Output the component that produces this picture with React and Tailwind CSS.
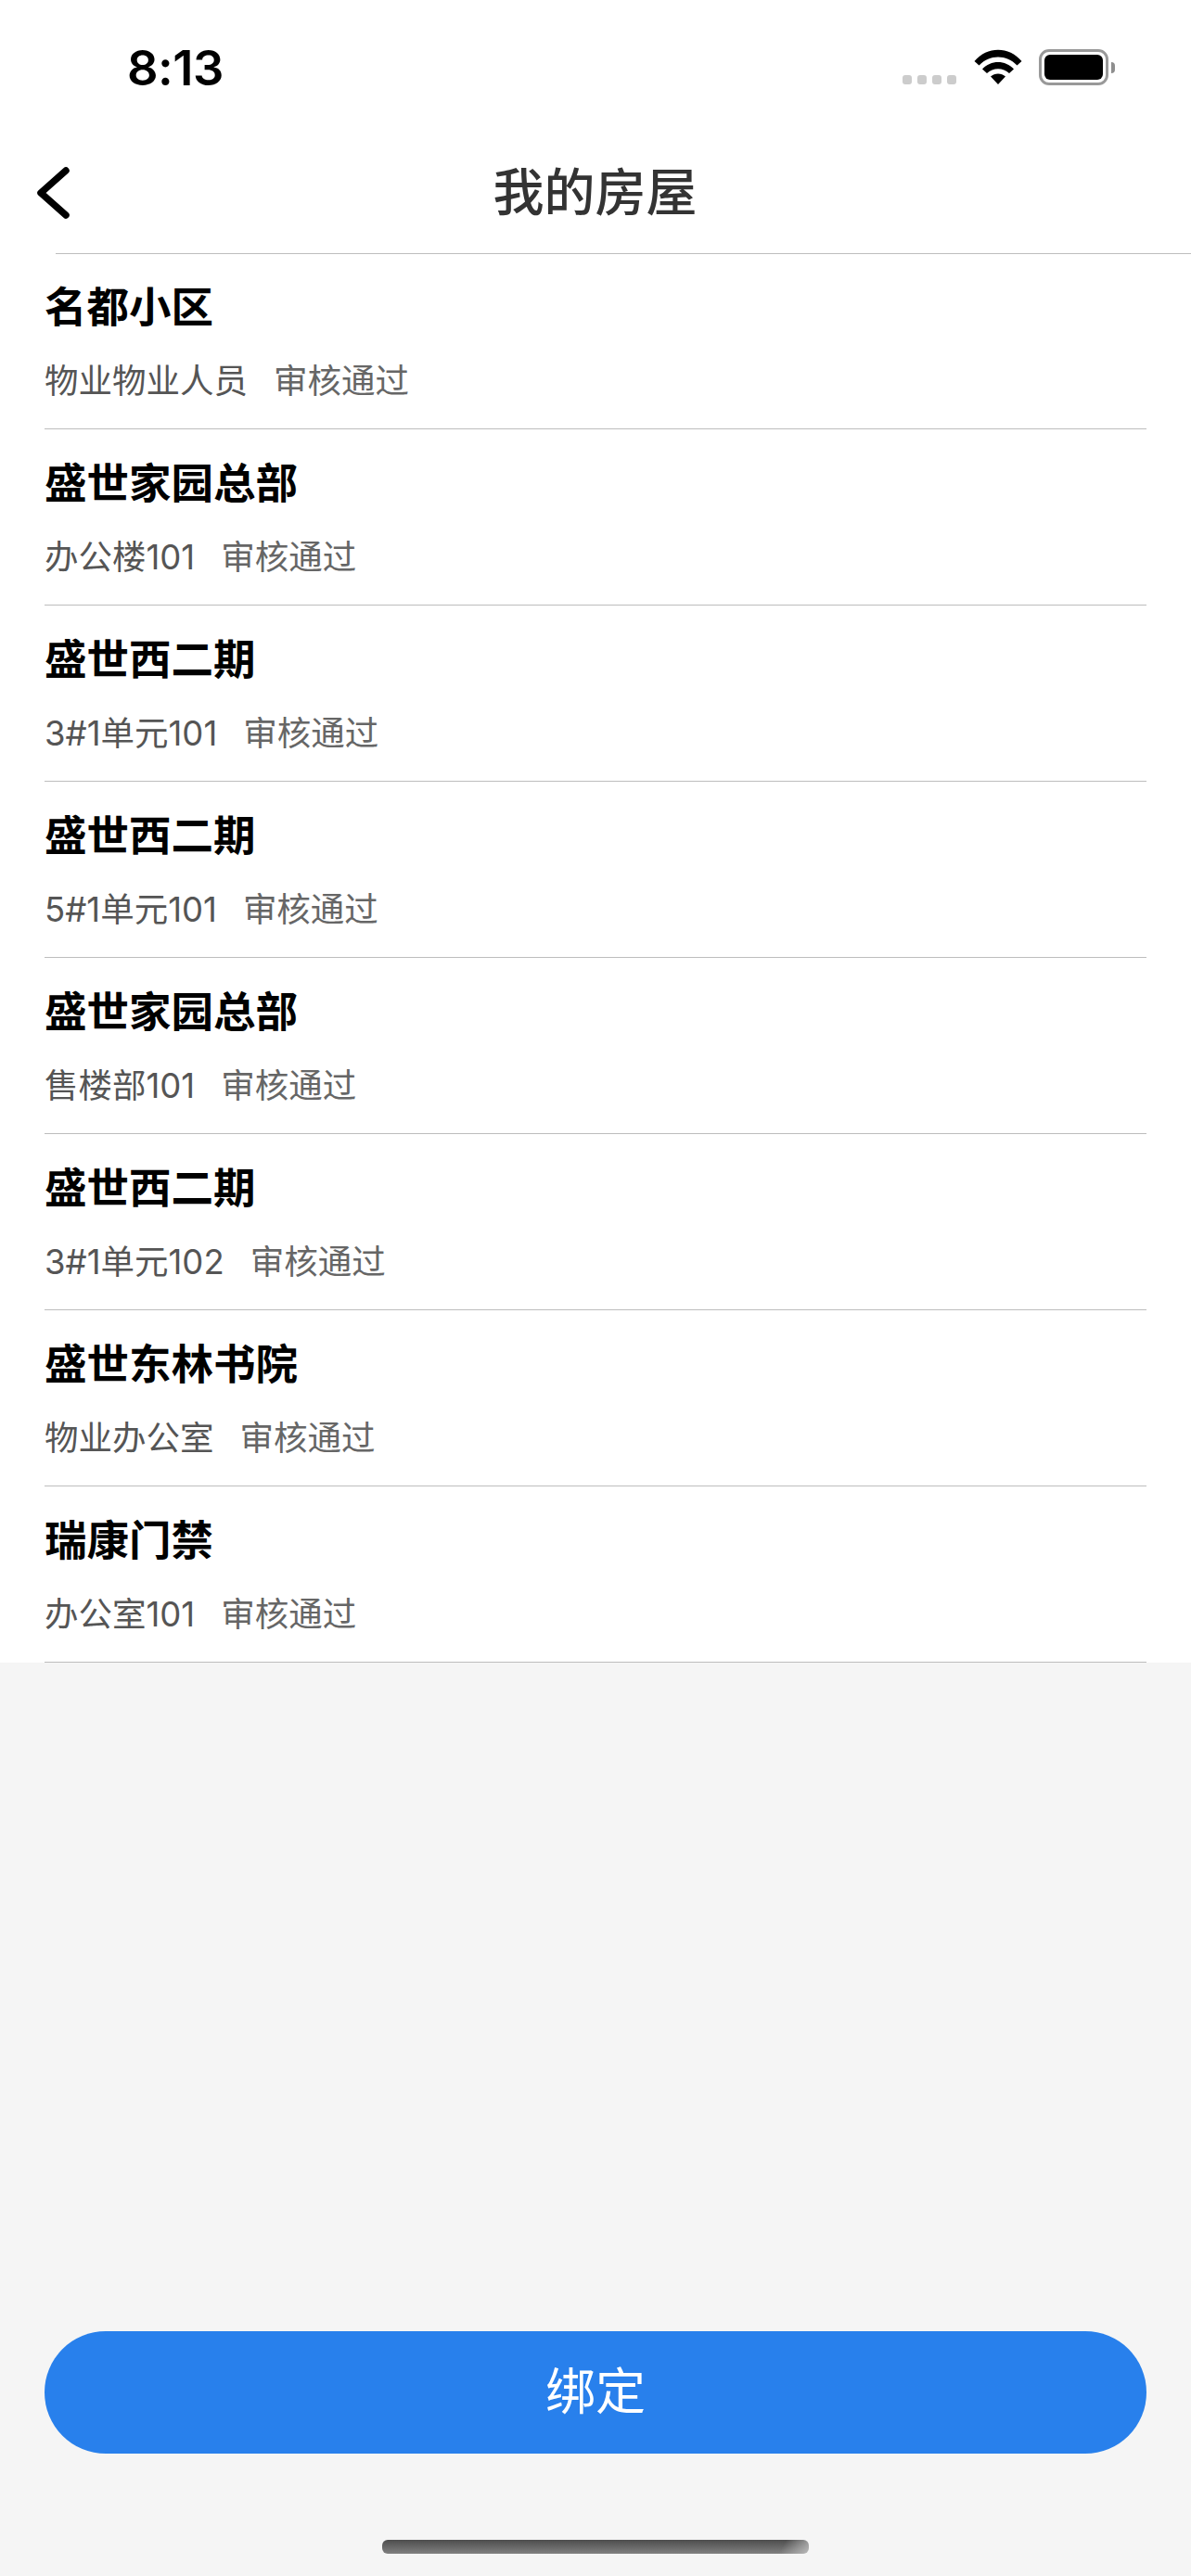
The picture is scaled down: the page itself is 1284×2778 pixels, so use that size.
import React from 'react';

const houses = [
  { name: '名都小区', unit: '物业物业人员' },
  { name: '盛世家园总部', unit: '办公楼101' },
  { name: '盛世西二期', unit: '3#1单元101' },
  { name: '盛世西二期', unit: '5#1单元101' },
  { name: '盛世家园总部', unit: '售楼部101' },
  { name: '盛世西二期', unit: '3#1单元102' },
  { name: '盛世东林书院', unit: '物业办公室' },
  { name: '瑞康门禁', unit: '办公室101' }
];

function WifiIcon() {
  return (
    <svg width="52" height="38" viewBox="0 0 52 38" fill="#000">
      <path d="M0.5 13 C14 -3.5 38 -3.5 51.500 13 L46.500 17.500 C35 5.500 17 5.500 5.500 17.500 Z" />
      <path d="M9 21.500 C18 11.500 34 11.500 43 21.500 L38 26 C31.500 19.500 20.500 19.500 14 26 Z" />
      <path d="M18 29.500 C22.500 25.500 29.500 25.500 34 29.500 L26 38 Z" />
    </svg>
  );
}

function Battery() {
  return (
    <div className="flex items-center">
      <div className="w-[75px] h-[39px] rounded-[11px] border-[3px] border-[#999999] p-[3px]">
        <div className="w-full h-full rounded-[6px] bg-black" />
      </div>
      <div className="ml-[3px] w-[4px] h-[12px] rounded-r-full bg-[#8e8e8e]" />
    </div>
  );
}

export default function App() {
  return (
    <div
      className="w-[1284px] h-[2778px] flex flex-col bg-[#f5f5f5]"
      style={{ fontFamily: 'Inter, "Noto Sans CJK SC", sans-serif' }}
    >
      <div className="bg-white">
        {/* status bar */}
        <div className="h-[144px] flex items-start justify-between pl-[137px] pr-[82px]">
          <span className="mt-[43px] text-[52.500px] leading-[60px] font-semibold text-black tracking-[-0.5px]">8:13</span>
          <div className="mt-[53px] flex items-start">
            <div className="mt-[28px] flex gap-[6px]">
              <span className="w-[10px] h-[10px] rounded-[3px] bg-[#cccccc]" />
              <span className="w-[10px] h-[10px] rounded-[3px] bg-[#cccccc]" />
              <span className="w-[10px] h-[10px] rounded-[3px] bg-[#cccccc]" />
              <span className="w-[10px] h-[10px] rounded-[3px] bg-[#cccccc]" />
            </div>
            <div className="ml-[19px] mr-[18px]">
              <WifiIcon />
            </div>
            <Battery />
          </div>
        </div>

        {/* nav */}
        <div className="h-[129px] flex items-center relative">
          <button className="ml-[38px] mb-[2px]">
            <svg width="40" height="62" viewBox="0 0 40 62" fill="none" stroke="#000" strokeWidth="7.500" strokeLinecap="round" strokeLinejoin="round" className="block">
              <path d="M33 7 L6 31 L33 55" />
            </svg>
          </button>
          <h1 className="absolute left-0 right-[1px] bottom-[34px] text-center text-[55px] leading-[64px] font-medium text-[#333333]">我的房屋</h1>
        </div>
        <div className="ml-[60px] h-px bg-[#bdbdbd]" />

        {/* list */}
        <div className="px-[48px]">
          {houses.map((house, i) => (
            <div key={i} className={`${i === 0 ? 'h-[189px]' : 'h-[190px]'} border-b border-[#bdbdbd]`}>
              <div className={`${i === 0 ? 'pt-[32px]' : 'pt-[33px]'} text-[45.500px] leading-[52px] font-bold text-black`}>{house.name}</div>
              <div className="mt-[31px] text-[36.500px] leading-[44px] text-[#666666]">
                <span className="text-[#555555]">{house.unit}</span>
                <span className="ml-[28px]">审核通过</span>
              </div>
            </div>
          ))}
        </div>
      </div>

      <div className="flex-1" />

      {/* bottom */}
      <div className="px-[48px]">
        <button className="w-full h-[132px] rounded-[66px] bg-[#2880ec] text-white text-[54px] leading-[132px]">绑定</button>
      </div>
      <div className="mt-[93px] mb-[24px] mx-auto w-[460px] h-[15px] rounded-[6px] bg-[linear-gradient(120deg,transparent_93%,rgba(200,200,200,0.8)),linear-gradient(#4d4d4d,#808080)]" />
    </div>
  );
}
